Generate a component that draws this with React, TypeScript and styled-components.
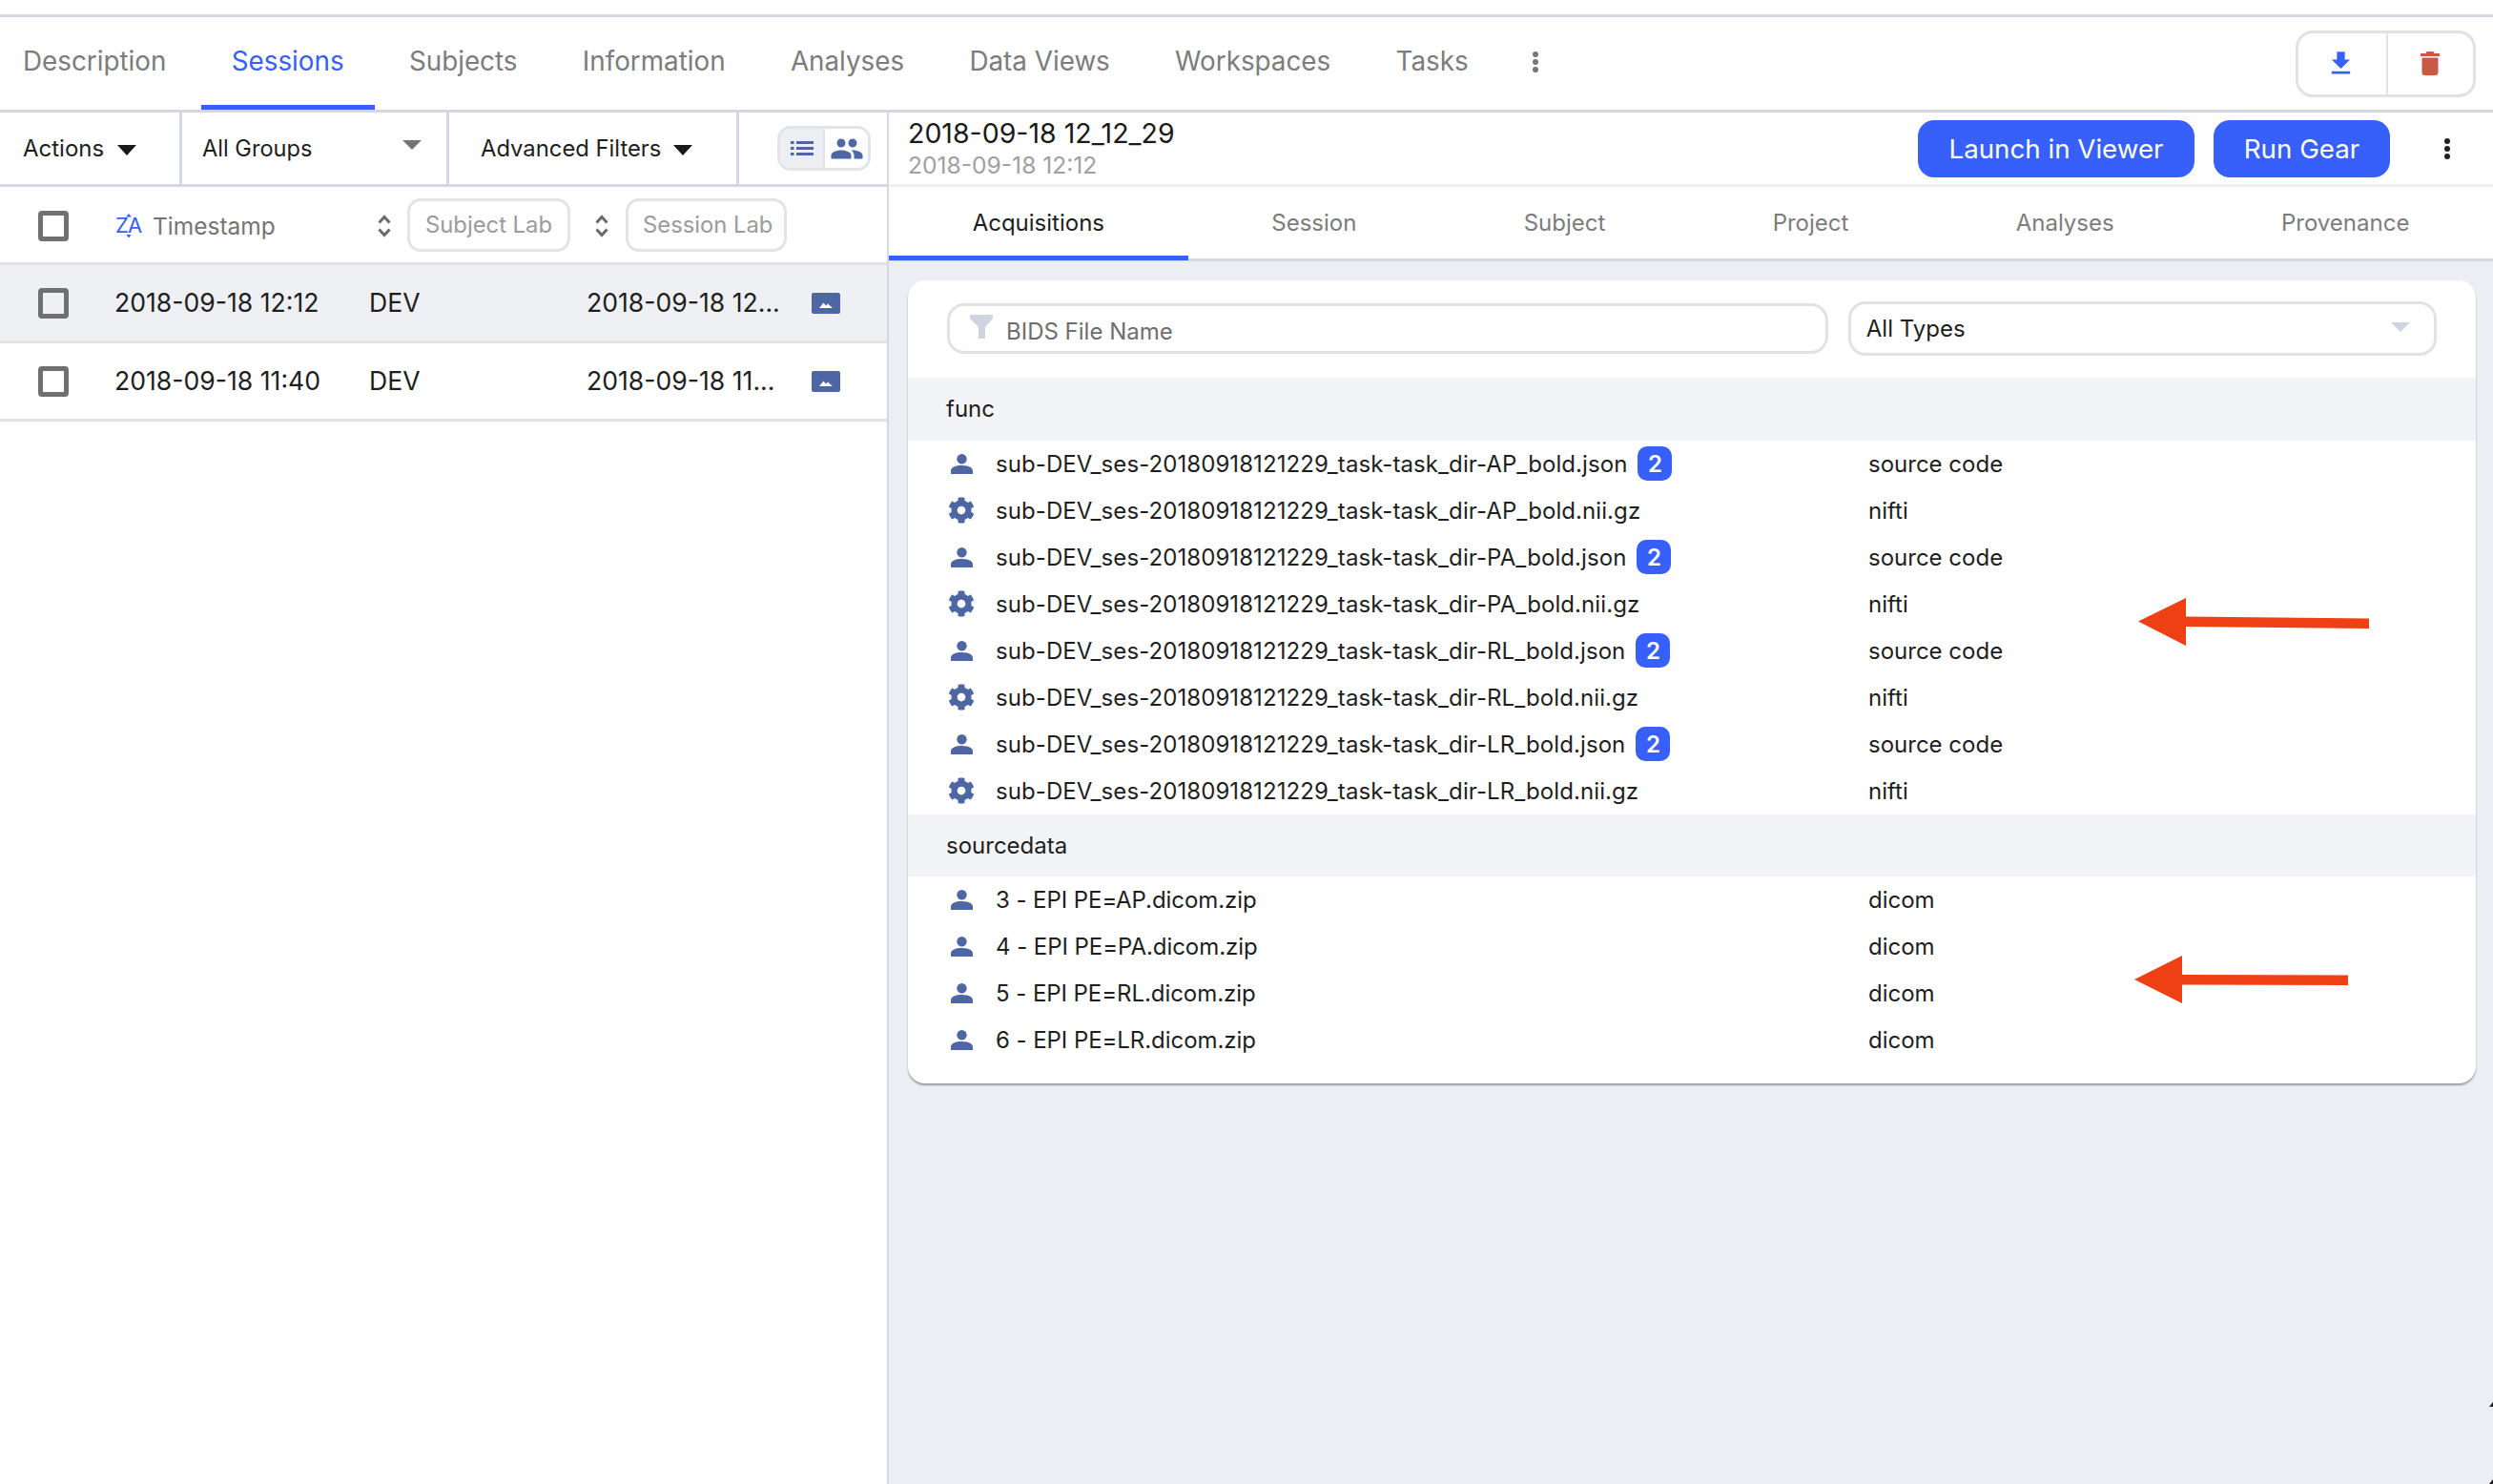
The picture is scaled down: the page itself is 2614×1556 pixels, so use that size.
import React from "react";
import styled, { createGlobalStyle } from "styled-components";
import { FaCog } from "react-icons/fa";
import { MdPeople, MdFileDownload } from "react-icons/md";

const GlobalStyle = createGlobalStyle`
  html, body {
    margin: 0;
    padding: 0;
    background: #fff;
    font-family: Inter, "Liberation Sans", sans-serif;
    color: #1e1e1e;
  }
  * { box-sizing: border-box; }
`;

const mainTabs = ["Description", "Sessions", "Subjects", "Information", "Analyses", "Data Views", "Workspaces", "Tasks"];
const subTabs = ["Acquisitions", "Session", "Subject", "Project", "Analyses", "Provenance"];

const sessions = [
  { time: "2018-09-18 12:12", subject: "DEV", label: "2018-09-18 12...", active: true },
  { time: "2018-09-18 11:40", subject: "DEV", label: "2018-09-18 11...", active: false },
];

const funcFiles = [
  { name: "sub-DEV_ses-20180918121229_task-task_dir-AP_bold.json", type: "source code", badge: 2, gear: false },
  { name: "sub-DEV_ses-20180918121229_task-task_dir-AP_bold.nii.gz", type: "nifti", gear: true },
  { name: "sub-DEV_ses-20180918121229_task-task_dir-PA_bold.json", type: "source code", badge: 2, gear: false },
  { name: "sub-DEV_ses-20180918121229_task-task_dir-PA_bold.nii.gz", type: "nifti", gear: true },
  { name: "sub-DEV_ses-20180918121229_task-task_dir-RL_bold.json", type: "source code", badge: 2, gear: false },
  { name: "sub-DEV_ses-20180918121229_task-task_dir-RL_bold.nii.gz", type: "nifti", gear: true },
  { name: "sub-DEV_ses-20180918121229_task-task_dir-LR_bold.json", type: "source code", badge: 2, gear: false },
  { name: "sub-DEV_ses-20180918121229_task-task_dir-LR_bold.nii.gz", type: "nifti", gear: true },
];

const sourceFiles = [
  { name: "3 - EPI PE=AP.dicom.zip", type: "dicom", gear: false },
  { name: "4 - EPI PE=PA.dicom.zip", type: "dicom", gear: false },
  { name: "5 - EPI PE=RL.dicom.zip", type: "dicom", gear: false },
  { name: "6 - EPI PE=LR.dicom.zip", type: "dicom", gear: false },
];

type FileItem = { name: string; type: string; badge?: number; gear: boolean };

const PersonIcon = () => (
  <svg width="23" height="21" viewBox="0 0 23 21">
    <circle cx="11.5" cy="5.2" r="5.2" fill="#4f66a5" />
    <path d="M0 21v-3.5C0 14 5 12 11.5 12S23 14 23 17.5V21z" fill="#4f66a5" />
  </svg>
);

const ImageIcon = () => (
  <svg width="30" height="22" viewBox="0 0 30 22">
    <rect width="30" height="22" rx="2" fill="#4f66a5" />
    <path d="M8 16l4.500-5.500 2.500 3 2-2 5 4.500z" fill="#fff" />
  </svg>
);

const ListIcon = () => (
  <svg width="24" height="15" viewBox="0 0 24 15" fill="#4f66a5">
    <rect x="0" y="0" width="3.500" height="3" />
    <rect x="6" y="0" width="18" height="3" />
    <rect x="0" y="6" width="3.500" height="3" />
    <rect x="6" y="6" width="18" height="3" />
    <rect x="0" y="12" width="3.500" height="3" />
    <rect x="6" y="12" width="18" height="3" />
  </svg>
);

const TrashIcon = () => (
  <svg width="20" height="25" viewBox="0 0 20 25" fill="#c85a45">
    <path d="M6.500 0h7l1 2H20v3H0V2h5.500z" />
    <path d="M1.500 6.500h17V22a3 3 0 0 1-3 3h-11a3 3 0 0 1-3-3z" />
  </svg>
);

const Kebab = ({ color }: { color: string }) => (
  <svg width="8" height="24" viewBox="0 0 8 24">
    <circle cx="4" cy="4" r="3" fill={color} />
    <circle cx="4" cy="12" r="3" fill={color} />
    <circle cx="4" cy="20" r="3" fill={color} />
  </svg>
);

const SortIcon = () => (
  <svg width="14" height="24" viewBox="0 0 14 24" fill="none" stroke="#6a6a6a" strokeWidth="3">
    <path d="M1.500 8.500L7 2.500l5.500 6" />
    <path d="M1.500 15.500L7 21.500l5.500-6" />
  </svg>
);

const ZaIcon = () => (
  <svg width="28" height="26" viewBox="0 0 28 26">
    <text x="0" y="20" fontFamily="Inter, sans-serif" fontSize="22" fill="#3660f9">Z</text>
    <text x="13" y="20" fontFamily="Inter, sans-serif" fontSize="22" fill="#3660f9">A</text>
    <path d="M11 3.500l3-3.500 3 3.500zM11.500 22h5L14 25.500z" fill="#3660f9" />
  </svg>
);

const Funnel = () => (
  <svg width="24" height="25" viewBox="0 0 24 25">
    <path d="M0 0h24v4l-8 9v12H9V13L0 4z" fill="#d0d4e1" />
  </svg>
);

const FileRows = ({ files, tight }: { files: FileItem[]; tight?: boolean }) => (
  <>
    {files.map((file) => (
      <FileRow key={file.name}>
        <NameCell>
          <IconSlot>{file.gear ? <FaCog size={28} color="#4f66a5" /> : <PersonIcon />}</IconSlot>
          <FileName $tight={tight}>{file.name}</FileName>
          {file.badge && <Badge>{file.badge}</Badge>}
        </NameCell>
        <span>{file.type}</span>
      </FileRow>
    ))}
  </>
);

const App: React.FC = () => {
  return (
    <Page>
      <GlobalStyle />
      <TopBar>
        <TabList>
          {mainTabs.map((tab) => (
            <MainTab key={tab} $active={tab === "Sessions"}>
              {tab}
            </MainTab>
          ))}
          <MoreTabs>
            <Kebab color="#757575" />
          </MoreTabs>
        </TabList>
        <IconGroup>
          <DownloadButton>
            <MdFileDownload size={33} color="#3660f9" />
          </DownloadButton>
          <IconButton>
            <TrashIcon />
          </IconButton>
        </IconGroup>
      </TopBar>
      <Split>
        <LeftPane>
          <Toolbar>
            <ActionsCell>
              Actions
              <Caret $color="#1a1a1a" />
            </ActionsCell>
            <GroupsCell>
              All Groups
              <GroupCaret $color="#757575" />
            </GroupsCell>
            <FiltersCell>
              Advanced Filters
              <Caret $color="#1a1a1a" />
            </FiltersCell>
            <ViewCell>
              <ViewToggle>
                <ViewOption $active>
                  <ListIcon />
                </ViewOption>
                <ViewOption>
                  <MdPeople size={36} color="#4f66a5" />
                </ViewOption>
              </ViewToggle>
            </ViewCell>
          </Toolbar>
          <HeaderRow>
            <CheckBox />
            <TimestampHead>
              <ZaIcon />
              Timestamp
            </TimestampHead>
            <SortSlot>
              <SortIcon />
            </SortSlot>
            <SubjectFilter>Subject Lab</SubjectFilter>
            <SortSlotNarrow>
              <SortIcon />
            </SortSlotNarrow>
            <SessionFilter>Session Lab</SessionFilter>
          </HeaderRow>
          {sessions.map((session) => (
            <SessionRow key={session.time} $active={session.active}>
              <CheckBox />
              <TimeCell>{session.time}</TimeCell>
              <SubjectCell>{session.subject}</SubjectCell>
              <LabelCell>{session.label}</LabelCell>
              <ImageIcon />
            </SessionRow>
          ))}
        </LeftPane>
        <RightPane>
          <DetailHeader>
            <TitleBlock>
              <Title>2018-09-18 12_12_29</Title>
              <SubTitle>2018-09-18 12:12</SubTitle>
            </TitleBlock>
            <PrimaryButton $width={290}>Launch in Viewer</PrimaryButton>
            <PrimaryButton $width={185}>Run Gear</PrimaryButton>
            <DetailMore>
              <Kebab color="#1e1e1e" />
            </DetailMore>
          </DetailHeader>
          <SubTabBar>
            {subTabs.map((tab, index) => (
              <SubTab key={tab} $active={index === 0}>
                {tab}
              </SubTab>
            ))}
          </SubTabBar>
          <Content>
            <Card>
              <FilterRow>
                <NameFilter>
                  <Funnel />
                  <NameFilterText>BIDS File Name</NameFilterText>
                </NameFilter>
                <TypeSelect>
                  All Types
                  <TypeCaret />
                </TypeSelect>
              </FilterRow>
              <GroupHeader $height={66}>func</GroupHeader>
              <FileRows files={funcFiles} />
              <GroupHeader $height={65}>sourcedata</GroupHeader>
              <FileRows files={sourceFiles} tight />
              <ArrowMark $left={1290} $top={333} width="244" height="52" viewBox="0 0 244 52">
                <path d="M0 24.500L50 0V19.500L242 21.500V32L50 30V50z" fill="#ee3f15" />
              </ArrowMark>
              <ArrowMark $left={1286} $top={708} width="226" height="52" viewBox="0 0 226 52">
                <path d="M0 25L50 0V20L224 20.500V31L50 30.500V50z" fill="#ee3f15" />
              </ArrowMark>
            </Card>
          </Content>
        </RightPane>
      </Split>
      <EdgeMark $top={1470} />
      <EdgeMark $top={1551} />
    </Page>
  );
};

const Page = styled.div`
  position: relative;
  width: 2614px;
  height: 1556px;
  padding-top: 15px;
  overflow: hidden;
  background: #fff;
`;

const TopBar = styled.div`
  display: flex;
  align-items: center;
  justify-content: space-between;
  height: 103px;
  padding-right: 18px;
  border-top: 3px solid #d5d8e3;
  border-bottom: 3px solid #d5d8e3;
`;

const TabList = styled.div`
  display: flex;
  align-items: stretch;
  height: 100%;
  margin-left: -8px;
  gap: 4.300px;
`;

const MainTab = styled.div<{ $active?: boolean }>`
  display: flex;
  align-items: center;
  height: 97px;
  padding: 0 32px;
  font-size: 27.800px;
  color: ${(p) => (p.$active ? "#3660f9" : "#7c7c7c")};
  border-bottom: 5px solid ${(p) => (p.$active ? "#3660f9" : "transparent")};
`;

const MoreTabs = styled.div`
  display: flex;
  align-items: center;
  margin-left: 30px;
  padding-bottom: 3px;
`;

const IconGroup = styled.div`
  display: flex;
  width: 189px;
  height: 70px;
  border: 3px solid #e2e2e2;
  border-radius: 18px;
`;

const IconButton = styled.div`
  flex: 1;
  display: flex;
  align-items: center;
  justify-content: center;
`;

const DownloadButton = styled(IconButton)`
  padding-right: 2px;
  border-right: 2px solid #e2e2e2;
`;

const Split = styled.div`
  display: grid;
  grid-template-columns: 930px 1fr;
  height: 1438px;
`;

const LeftPane = styled.div`
  background: #fff;
`;

const Toolbar = styled.div`
  display: flex;
  height: 78px;
  border-bottom: 3px solid #d5d8e3;
  font-size: 24px;
  color: #1e1e1e;
`;

const ActionsCell = styled.div`
  display: flex;
  align-items: center;
  gap: 14px;
  width: 191px;
  padding-left: 24px;
  border-right: 3px solid #d5d8e3;
`;

const GroupsCell = styled.div`
  position: relative;
  display: flex;
  align-items: center;
  width: 280px;
  padding-left: 21px;
  border-right: 3px solid #d5d8e3;
  font-size: 23.600px;
`;

const FiltersCell = styled.div`
  display: flex;
  align-items: center;
  gap: 13px;
  width: 304px;
  padding-left: 33px;
  border-right: 3px solid #d5d8e3;
  font-size: 23.800px;
`;

const ViewCell = styled.div`
  display: flex;
  align-items: center;
  padding-left: 40px;
`;

const Caret = styled.span<{ $color: string }>`
  width: 0;
  height: 0;
  margin-top: 3px;
  border-left: 10.500px solid transparent;
  border-right: 10.500px solid transparent;
  border-top: 11px solid ${(p) => p.$color};
`;

const GroupCaret = styled(Caret)`
  position: absolute;
  right: 26px;
  top: 29px;
  margin: 0;
  border-left-width: 10px;
  border-right-width: 10px;
  border-top-width: 10px;
`;

const ViewToggle = styled.div`
  display: flex;
  width: 98px;
  height: 47px;
  border: 3px solid #e2e4ea;
  border-radius: 14px;
  overflow: hidden;
`;

const ViewOption = styled.div<{ $active?: boolean }>`
  display: flex;
  align-items: center;
  justify-content: center;
  flex: 1;
  background: ${(p) => (p.$active ? "#eceef2" : "#fff")};
  & + & {
    border-left: 2px solid #e2e4ea;
  }
`;

const HeaderRow = styled.div`
  display: flex;
  align-items: center;
  height: 82px;
  padding: 3px 0 0 40px;
  border-bottom: 3px solid #e2e2e2;
`;

const CheckBox = styled.div`
  flex: none;
  width: 32px;
  height: 32px;
  border: 5px solid #707070;
  border-radius: 4px;
`;

const TimestampHead = styled.div`
  display: flex;
  align-items: center;
  gap: 11px;
  width: 275px;
  margin-left: 49px;
  font-size: 24.500px;
  color: #757575;
`;

const SortSlot = styled.div`
  display: flex;
  width: 31px;
`;

const SortSlotNarrow = styled.div`
  display: flex;
  width: 58px;
  padding-left: 26px;
`;

const LabFilter = styled.div`
  display: flex;
  align-items: center;
  height: 56px;
  margin-bottom: 3px;
  border: 3px solid #e4e4e4;
  border-radius: 14px;
  font-size: 23.800px;
  color: #9b9b9b;
`;

const SubjectFilter = styled(LabFilter)`
  width: 171px;
  padding-left: 16px;
`;

const SessionFilter = styled(LabFilter)`
  width: 169px;
  padding-left: 15px;
`;

const SessionRow = styled.div<{ $active?: boolean }>`
  display: flex;
  align-items: center;
  height: 82px;
  padding: 1px 0 0 40px;
  font-size: 26.600px;
  background: ${(p) => (p.$active ? "#eff0f3" : "#fff")};
  border-bottom: 3px solid #e2e2e2;
`;

const RowText = styled.div`
  padding-bottom: 2px;
`;

const TimeCell = styled(RowText)`
  width: 267px;
  margin-left: 48px;
`;

const SubjectCell = styled(RowText)`
  width: 228px;
`;

const LabelCell = styled(RowText)`
  width: 236px;
`;

const RightPane = styled.div`
  display: flex;
  flex-direction: column;
  min-width: 0;
  border-left: 2px solid #d5d8e3;
  background: #eceef3;
`;

const DetailHeader = styled.div`
  display: flex;
  align-items: center;
  gap: 20px;
  height: 78px;
  padding: 0 44px 0 20px;
  background: #fff;
  border-bottom: 3px solid #eef0f4;
`;

const TitleBlock = styled.div`
  flex: 1;
  display: flex;
  flex-direction: column;
  padding-bottom: 2px;
`;

const Title = styled.div`
  font-size: 28.500px;
  line-height: 36px;
  color: #1a1a1a;
`;

const SubTitle = styled.div`
  font-size: 24.600px;
  line-height: 30px;
  color: #a0a0a0;
`;

const PrimaryButton = styled.div<{ $width: number }>`
  display: flex;
  align-items: center;
  justify-content: center;
  width: ${(p) => p.$width}px;
  height: 60px;
  border-radius: 17px;
  background: #3660f9;
  color: #fff;
  font-size: 27.700px;
`;

const DetailMore = styled.div`
  display: flex;
  margin-left: 36px;
`;

const SubTabBar = styled.div`
  display: flex;
  height: 78px;
  background: #fff;
  border-bottom: 3px solid #d5d8e0;
`;

const SubTab = styled.div<{ $active?: boolean }>`
  flex: 1 1 auto;
  display: flex;
  align-items: center;
  justify-content: center;
  height: 77px;
  padding-top: 2px;
  font-size: 24px;
  color: ${(p) => (p.$active ? "#1e1e1e" : "#7c7c7c")};
  border-bottom: 5px solid ${(p) => (p.$active ? "#3660f9" : "transparent")};
`;

const Content = styled.div`
  flex: 1;
  padding: 20px 18px 0 20px;
`;

const Card = styled.div`
  position: relative;
  height: 842px;
  background: #fff;
  border-radius: 18px;
  box-shadow: 0 2px 2px rgba(0, 0, 0, 0.35);
  overflow: hidden;
`;

const FilterRow = styled.div`
  display: flex;
  align-items: center;
  gap: 21px;
  height: 102px;
  padding: 0 41px 1px;
`;

const NameFilter = styled.div`
  display: flex;
  align-items: flex-start;
  width: 925px;
  height: 53px;
  padding: 9px 0 0 21px;
  border: 3px solid #e2e2e2;
  border-radius: 18px;
`;

const NameFilterText = styled.span`
  margin: 3px 0 0 14px;
  font-size: 24px;
  color: #6e6e6e;
`;

const TypeSelect = styled.div`
  position: relative;
  display: flex;
  align-items: center;
  width: 618px;
  height: 57px;
  padding-left: 16px;
  border: 3px solid #e2e2e2;
  border-radius: 18px;
  font-size: 24px;
`;

const TypeCaret = styled.span`
  position: absolute;
  right: 25px;
  top: 19px;
  width: 0;
  height: 0;
  border-left: 10px solid transparent;
  border-right: 10px solid transparent;
  border-top: 10px solid #d0d4e1;
`;

const GroupHeader = styled.div<{ $height: number }>`
  display: flex;
  align-items: center;
  height: ${(p) => p.$height}px;
  padding: 0 0 1px 40px;
  background: #f3f4f8;
  font-size: 24px;
`;

const FileRow = styled.div`
  display: grid;
  grid-template-columns: 1007px 1fr;
  align-items: center;
  height: 49px;
  padding-bottom: 1px;
  font-size: 24px;
`;

const NameCell = styled.div`
  display: flex;
  align-items: center;
  padding-left: 42px;
`;

const FileName = styled.span<{ $tight?: boolean }>`
  letter-spacing: ${(p) => (p.$tight ? "-0.06px" : "0.08px")};
`;

const IconSlot = styled.span`
  display: flex;
  align-items: center;
  justify-content: center;
  width: 28px;
  margin-right: 22px;
`;

const Badge = styled.span`
  display: flex;
  align-items: center;
  justify-content: center;
  width: 36px;
  height: 36px;
  margin-left: 11px;
  border-radius: 10px;
  background: #3660f9;
  color: #fff;
  font-size: 24px;
  font-weight: 600;
`;

const ArrowMark = styled.svg<{ $left: number; $top: number }>`
  position: absolute;
  left: ${(p) => p.$left}px;
  top: ${(p) => p.$top}px;
`;

const EdgeMark = styled.span<{ $top: number }>`
  position: absolute;
  right: 0;
  top: ${(p) => p.$top}px;
  width: 0;
  height: 0;
  border-left: 4px solid transparent;
  border-bottom: 5px solid #1e1e1e;
`;

export default App;
